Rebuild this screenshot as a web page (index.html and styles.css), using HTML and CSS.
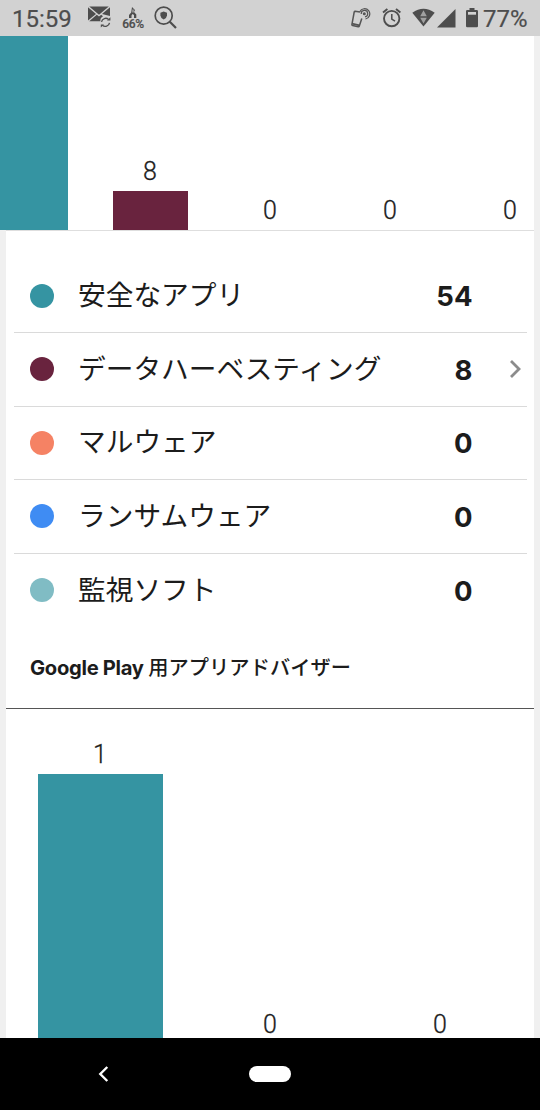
FILE: index.html
```
<!DOCTYPE html>
<html lang="ja">
<head>
    <meta charset="UTF-8">
    <meta name="viewport" content="width=device-width, initial-scale=1.0">
    <title>アプリアドバイザー</title>
    <link rel="stylesheet" href="styles.css">
</head>
<body>
    <!-- ステータスバー -->
    <header class="status">
        <span class="clock">15:59</span>
        <svg class="ic_mail" width="24" height="24" viewBox="0 0 24 24">
            <path d="M0 1.2 L8 8 L0 14.5 Z M1.2 0.5 H20.8 L11 8.8 Z M22 1.2 V10 L14 8 Z M8.8 8.8 L11 10.6 L13.2 8.8 L15 10.3 Q12 12 12.4 15.2 H1.2 Z" fill="#4d4d4d"/>
            <path d="M13.5 15.8 A4.3 4.3 0 0 1 20.6 13.4 M21.5 16.8 A4.3 4.3 0 0 1 14.4 19.3" fill="none" stroke="#4d4d4d" stroke-width="1.3"/>
            <path d="M19 14.4 H22.4 V11.2 Z M16 18.4 H12.8 V21.6 Z" fill="#4d4d4d"/>
        </svg>
        <div class="usage">
            <svg width="10" height="12" viewBox="0 0 10 12">
                <path d="M4 0 L7 3 L6 5 L8.3 7.5 V11 H6 V8 L4.5 7 L3.5 8.5 V11 H1 V8 L3.2 5.5 Z" fill="#4d4d4d"/>
                <path d="M5 2.5 V5.5" stroke="#d2d2d2" stroke-width="1"/>
            </svg>
            <span>66%</span>
        </div>
        <svg class="ic_search" width="24" height="24" viewBox="0 0 24 24" fill="none" stroke="#4d4d4d">
            <circle cx="9.7" cy="9.7" r="8.5" stroke-width="1.7"/>
            <path d="M15.8 15.8 L22 22" stroke-width="2.2"/>
            <path d="M9.7 5.5 L13 6.8 V9.5 Q12.8 12 9.7 13.6 Q6.6 12 6.4 9.5 V6.8 Z" fill="#4d4d4d" stroke="none"/>
        </svg>
        <div class="right">
            <svg width="20" height="22" viewBox="0 0 20 22" fill="none" stroke="#555">
                <path d="M9 5 L4.2 4.2 Q3.4 4.2 3.2 5 L0.9 17.5 Q0.8 18.4 1.6 18.6 L7.2 19.8 Q8 20 8.3 19 L10.8 11.5" stroke-width="1.5"/>
                <path d="M1 16.7 L8.5 18.3" stroke-width="1.8"/>
                <circle cx="13.3" cy="6.7" r="1.5" fill="#555" stroke="none"/>
                <path d="M10.3 7 A3.2 3.2 0 1 1 14 9.8 M8.8 4.8 A5.2 5.2 0 1 1 14.5 12" stroke-width="1.2"/>
            </svg>
            <svg class="ic_alarm" width="20" height="20" viewBox="0 0 20 20" fill="none" stroke="#4d4d4d">
                <circle cx="9.7" cy="10.6" r="7.7" stroke-width="1.9"/>
                <path d="M9.8 6 V11 L13 13.2" stroke-width="1.5"/>
                <path d="M1 4.6 L5.4 1 M14 1 L18.4 4.6" stroke-width="1.9"/>
            </svg>
            <svg class="ic_wifi" width="24" height="20" viewBox="0 0 24 20">
                <path d="M0.3 4.8 Q11.5 -3.2 22.7 4.8 L11.5 18.6 Z" fill="#4d4d4d"/>
                <path d="M11.5 2.2 L14.8 8.2 H8.2 Z M8.2 9.8 H14.8 L11.5 15.5 Z" fill="#a0a0a0"/>
            </svg>
            <svg class="ic_signal" width="19" height="19" viewBox="0 0 19 19">
                <path d="M0 18.5 L18.5 0 V18.5 Z" fill="#4d4d4d"/>
            </svg>
            <svg class="ic_battery" width="12" height="20" viewBox="0 0 12 20">
                <path d="M3.5 0 H8.5 V2 H10.8 Q12 2 12 3.2 V18 Q12 19.2 10.8 19.2 H1.2 Q0 19.2 0 18 V3.2 Q0 2 1.2 2 H3.5 Z" fill="#4d4d4d"/>
                <path d="M2 4 H10 V6.7 H2 Z" fill="#d2d2d2"/>
            </svg>
            <span class="percent">77%</span>
        </div>
    </header>

    <main class="page">
        <div class="panel">
            <!-- インストール済みアプリのグラフ -->
            <div class="chart chart_top">
                <div class="col"><div class="bar teal" style="height: 260px;"></div></div>
                <div class="col"><span>8</span><div class="bar wine" style="height: 39px;"></div></div>
                <div class="col"><span>0</span></div>
                <div class="col"><span>0</span></div>
                <div class="col"><span>0</span></div>
            </div>

            <!-- 凡例 -->
            <ul class="legend">
                <li><i class="dot teal"></i><span class="name">安全なアプリ</span><b>54</b></li>
                <li><i class="dot wine"></i><span class="name">データハーベスティング</span><b>8</b>
                    <svg class="chevron" width="13" height="20" viewBox="0 0 13 20"><path d="M2 2 L10 10 L2 18" fill="none" stroke="#8c8c8c" stroke-width="2.8"/></svg>
                </li>
                <li><i class="dot coral"></i><span class="name">マルウェア</span><b>0</b></li>
                <li><i class="dot blue"></i><span class="name">ランサムウェア</span><b>0</b></li>
                <li><i class="dot aqua"></i><span class="name">監視ソフト</span><b>0</b></li>
            </ul>

            <h2>Google Play <span>用アプリアドバイザー</span></h2>

            <!-- Google Play のグラフ -->
            <div class="chart chart_play">
                <div class="col"><span>1</span><div class="bar teal" style="height: 270px;"></div></div>
                <div class="col"><span>0</span></div>
                <div class="col"><span>0</span></div>
            </div>
        </div>
    </main>

    <!-- ナビゲーションバー -->
    <footer class="nav">
        <svg class="back" width="12" height="18" viewBox="0 0 12 18"><path d="M10.3 2 L3.3 9 L10.3 16" fill="none" stroke="#fff" stroke-width="2.4"/></svg>
        <div class="home"></div>
    </footer>
</body>
</html>
```
FILE: styles.css
```
*{box-sizing: border-box;}
body{
    margin: 0; width: 540px; height: 1110px; overflow: hidden;
    display: flex; flex-direction: column;
    background-color: #f0f0f0; color: #1c1c1c;
    font-family: Inter, "Noto Sans CJK JP", sans-serif;
}
svg{display: block; flex: none;}

/* ステータスバー */
.status{
    flex: none; height: 36px; padding: 2px 12px 0;
    display: flex; align-items: center;
    background-color: #d2d2d2; color: #4d4d4d;
    font-family: Roboto, sans-serif; font-size: 24px;
    -webkit-text-stroke: 0.2px #4d4d4d;
}
.status svg, .usage{margin-top: -2px;}
.clock{width: 76px;}
.usage{
    width: 24px; margin-left: 9px;
    display: flex; flex-direction: column; align-items: center;
    font-size: 12px; font-weight: 500; line-height: 11px; letter-spacing: -0.3px;
}
.usage svg{margin-top: 0;}
.ic_search{margin-left: 9px;}
.right{margin-left: auto; display: flex; align-items: center;}
.ic_alarm{margin-left: 11px;}
.ic_wifi{margin-left: 10px;}
.ic_signal{margin-left: 1px;}
.ic_battery{margin-left: 10px;}
.percent{width: 45px; margin-left: 5px;}

.page{flex: none; height: 1002px; padding: 0 6px; overflow: hidden;}
.panel{background-color: #fff; height: 1010px;}

/* グラフ */
.chart{display: grid; justify-content: center; border-bottom: 1px solid #dedede;}
.chart_top{height: 195px; grid-template-columns: repeat(5, 120px);}
.chart_play{height: 336px; grid-template-columns: repeat(3, 170px);}
.col{
    display: flex; flex-direction: column; align-items: center; justify-content: flex-end;
    min-height: 0; font-family: Roboto, sans-serif;
    font-size: 25px; font-weight: 300; line-height: 39px;
    -webkit-text-stroke: 0.3px #1c1c1c;
}
.bar{flex: none; width: 75px;}
.chart_play .bar{width: 125px;}

.teal{background-color: #3594a2;}
.wine{background-color: #69233e;}
.coral{background-color: #f58264;}
.blue{background-color: #3f8cf3;}
.aqua{background-color: #80bcc4;}

/* 凡例 */
.legend{list-style: none; margin: 0; padding: 28.5px 7.5px 0;}
.legend li{
    display: flex; align-items: center; height: 73.5px; padding-left: 16.5px;
    border-bottom: 1.5px solid #dadada;
}
.legend li:last-child{border-bottom: 0;}
.dot{width: 24px; height: 24px; border-radius: 50%;}
.name{margin-left: 24px; font-size: 27.7px; font-weight: 400; line-height: 40px; padding-bottom: 1px;}
.legend b{margin-left: auto; margin-right: 54px; padding-top: 1px; font-size: 27.5px; font-weight: 700;}
.chevron{margin-left: -18px; margin-right: 5px;}

h2{
    height: 82px; margin: 0; padding: 26px 24px 0;
    border-bottom: 1.5px solid #555;
    font-size: 20.2px; font-weight: 700; line-height: 30px; letter-spacing: -0.3px;
}
h2 span{font-weight: 500; letter-spacing: 0.1px;}

/* ナビゲーションバー */
.nav{
    flex: 1; background-color: #000;
    display: flex; align-items: center; padding-left: 97px;
}
.home{width: 42px; height: 16px; border-radius: 8px; background-color: #fff; margin-left: 140px;}
```
